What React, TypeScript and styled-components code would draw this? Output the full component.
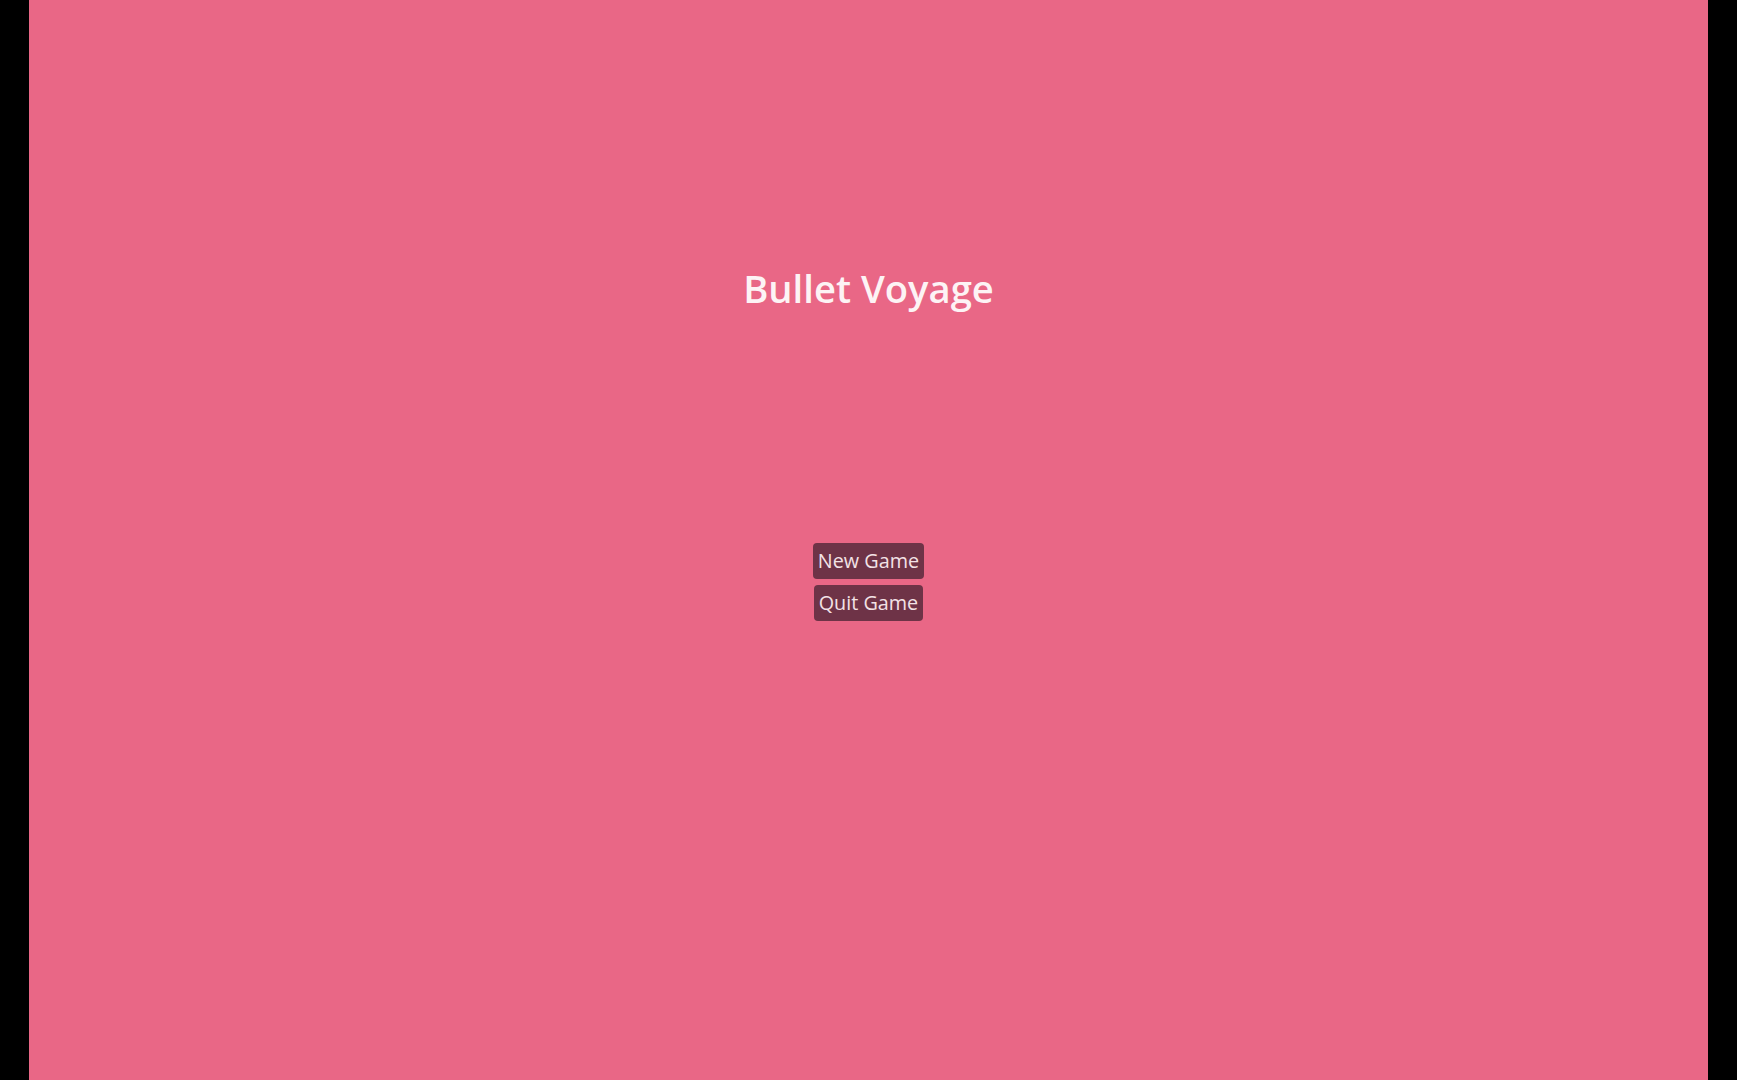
import React from "react";
import styled, { createGlobalStyle } from "styled-components";

const Global = createGlobalStyle`
  html, body { margin: 0; padding: 0; background: #000; height: 100%; }
  #root { height: 100%; }
  * { box-sizing: border-box; }
`;

const Screen = styled.div`
  height: 1080px;
  display: flex;
  justify-content: center;
  background: #000;
`;

const Stage = styled.main`
  width: 1679px;
  height: 1080px;
  background: #e96786;
  display: flex;
  flex-direction: column;
  align-items: center;
  font-family: "Open Sans", "Noto Sans", sans-serif;
`;

const Title = styled.h1`
  margin: 260px 0 0;
  font-size: 38.2px;
  font-weight: 600;
  line-height: 56px;
  color: #fdf3f5;
`;

const Menu = styled.nav`
  margin-top: 227px;
  display: flex;
  flex-direction: column;
  align-items: center;
  gap: 6px;
`;

const MenuButton = styled.button`
  font-family: "Open Sans", "Noto Sans", sans-serif;
  font-size: 19.8px;
  font-weight: 500;
  line-height: 26px;
  padding: 5px 5px;
  border: none;
  border-radius: 4px;
  background: #6e3347;
  color: #f3e2e6;
  cursor: pointer;
`;

export default function App() {
  return (
    <>
      <Global />
      <Screen>
        <Stage>
          <Title>Bullet Voyage</Title>
          <Menu>
            <MenuButton>New Game</MenuButton>
            <MenuButton>Quit Game</MenuButton>
          </Menu>
        </Stage>
      </Screen>
    </>
  );
}
